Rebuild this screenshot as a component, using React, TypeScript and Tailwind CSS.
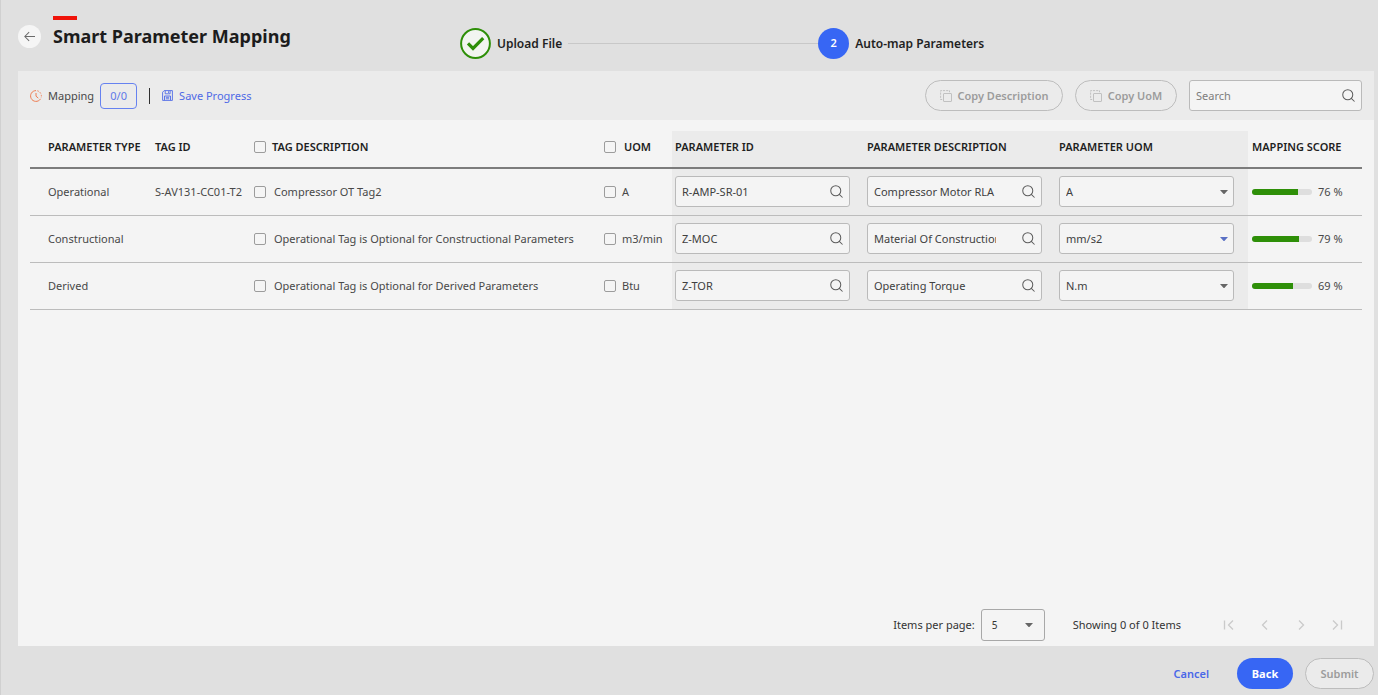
import React from "react";

type Row = {
  type: string;
  tagId: string;
  description: string;
  uom: string;
  paramId: string;
  paramDescription: string;
  paramUom: string;
  score: number;
  focused?: boolean;
};

const rows: Row[] = [
  {
    type: "Operational",
    tagId: "S-AV131-CC01-T2",
    description: "Compressor OT Tag2",
    uom: "A",
    paramId: "R-AMP-SR-01",
    paramDescription: "Compressor Motor RLA",
    paramUom: "A",
    score: 76,
  },
  {
    type: "Constructional",
    tagId: "",
    description: "Operational Tag is Optional for Constructional Parameters",
    uom: "m3/min",
    paramId: "Z-MOC",
    paramDescription: "Material Of Construction",
    paramUom: "mm/s2",
    score: 79,
    focused: true,
  },
  {
    type: "Derived",
    tagId: "",
    description: "Operational Tag is Optional for Derived Parameters",
    uom: "Btu",
    paramId: "Z-TOR",
    paramDescription: "Operating Torque",
    paramUom: "N.m",
    score: 69,
  },
];

function SearchIcon() {
  return (
    <svg className="size-[13px] shrink-0 text-[#5c5c5c]" viewBox="0 0 14 14" fill="none" stroke="currentColor" strokeWidth="1.1" strokeLinecap="round">
      <circle cx="6.2" cy="6.2" r="5.4" />
      <path d="M10 10.1 13.2 13.2" />
    </svg>
  );
}

function Caret({ className }: { className: string }) {
  return (
    <svg className={className} viewBox="0 0 8 4" fill="currentColor">
      <path d="M0 0h8L4.6 3.7a.8.8 0 0 1-1.2 0Z" />
    </svg>
  );
}

function CopyIcon() {
  return (
    <svg className="size-3 shrink-0 text-[#bcbcbc]" viewBox="0 0 12 12" fill="none" stroke="currentColor" strokeWidth="0.9">
      <rect x="3.5" y="3.5" width="8" height="8" rx="0.5" />
      <path d="M2.2 9.5H.6V.6h8.9v1.6" strokeDasharray="2.2 1" />
    </svg>
  );
}

function ClockIcon() {
  return (
    <svg className="size-3 shrink-0 text-[#ee7d52]" viewBox="0 0 12 12" fill="none" stroke="currentColor" strokeWidth="1">
      <path d="M6 .6a5.4 5.4 0 1 0 4.4 8.5" />
      <path d="M7.4.8a5.4 5.4 0 0 1 3.5 7.4" strokeDasharray="1.5 1.3" />
      <path d="M6 3v3.2l2.3 1.9" />
    </svg>
  );
}

function SaveIcon() {
  return (
    <svg className="size-[11px] shrink-0" viewBox="0 0 11 11" fill="none" stroke="currentColor" strokeWidth="0.9">
      <path d="M2.2.6h8.2v9.8H.6V2.2Z" />
      <path d="M3.2.8v3h4.9v-3M6.5 1.3v1.6M2.5 10.2V6h6v4.2M3.8 7.3h3.4M3.8 8.8h3.4" />
    </svg>
  );
}

function Checkbox({ label }: { label: string }) {
  return (
    <input
      type="checkbox"
      aria-label={label}
      className="size-3 shrink-0 appearance-none rounded-[2px] border border-[#9c9c9c] bg-[#f5f5f5] checked:bg-[#3366ff]"
    />
  );
}

function SearchField({ label, value }: { label: string; value: string }) {
  return (
    <label className="flex h-[31px] w-[175px] items-center gap-[26px] rounded-[3px] border border-[#bababa] bg-[#f4f4f4] px-1.5">
      <input aria-label={label} defaultValue={value} className="w-full min-w-0 bg-transparent text-[#404040] outline-none" />
      <SearchIcon />
    </label>
  );
}

function PagerButton({ label, path }: { label: string; path: string }) {
  return (
    <button type="button" aria-label={label} disabled className="flex size-6 items-center justify-center text-[#cacaca]">
      <svg className="size-3" viewBox="0 0 12 12" fill="none" stroke="currentColor" strokeWidth="1.3">
        <path d={path} />
      </svg>
    </button>
  );
}

const headCell = "h-[37px] pb-1 pl-1 text-left font-semibold whitespace-nowrap text-[#1f1f1f]";
const paramHeadCell = "h-[37px] bg-[#ebebeb] pb-1 pl-[3px] text-left font-semibold whitespace-nowrap text-[#1f1f1f]";
const bodyCell = "h-[47px] pl-1 whitespace-nowrap";
const paramCell = "h-[47px] bg-[#ebebeb] pl-[3px] whitespace-nowrap";

export default function App() {
  return (
    <div className="flex min-h-screen flex-col border-l border-[#d0d0d0] bg-[#e0e0e0] pr-1 pl-[17px] font-['Noto_Sans',sans-serif] text-[11px] leading-4 text-[#484848]">
      <header className="flex h-[71px] items-start">
        <div className="flex w-[442px] shrink-0 items-start">
          <button type="button" aria-label="Go back" className="mt-[25px] flex size-[23px] items-center justify-center rounded-full bg-[#f5f5f5] text-[#6a6a6a]">
            <svg className="size-[11px]" viewBox="0 0 12 12" fill="none" stroke="currentColor" strokeWidth="1.1">
              <path d="M12 6H1M5.6 1.2.9 6l4.7 4.8" />
            </svg>
          </button>
          <div className="mt-4 ml-3">
            <div className="h-1 w-6 bg-[#f0140a]" />
            <h1 className="mt-1 text-lg leading-6 font-bold whitespace-nowrap text-[#1c1c1c]">Smart Parameter Mapping</h1>
          </div>
        </div>
        <ol className="mt-7 flex items-center text-xs font-semibold whitespace-nowrap text-[#1f1f1f]">
          <li className="flex items-center gap-1.5">
            <svg className="size-[31px]" viewBox="0 0 31 31" fill="none">
              <circle cx="15.5" cy="15.5" r="14.4" fill="#f2f5f0" stroke="#2e8f08" strokeWidth="2" />
              <path d="m8 15.4 5 5L23.2 10.200" stroke="#2e8f08" strokeWidth="3.2" />
            </svg>
            Upload File
          </li>
          <li aria-hidden="true" className="ml-1.5 h-px w-[250px] bg-[#c8c8c8]" />
          <li className="flex items-center gap-1.5">
            <span className="flex size-[31px] items-center justify-center rounded-full bg-[#3766f4] text-[11px] text-white">2</span>
            Auto-map Parameters
          </li>
        </ol>
      </header>

      <main className="flex flex-1 flex-col bg-[#f4f4f4]">
        <div className="flex h-[49px] items-center justify-between bg-[#ebebeb] px-3">
          <div className="flex items-center">
            <ClockIcon />
            <span className="ml-1.5">Mapping</span>
            <span className="ml-1.5 flex h-[26px] w-[37px] items-center justify-center rounded border border-[#6682f0] text-[#5e78e8]">0/0</span>
            <span className="ml-3 h-4 w-px bg-[#303030]" />
            <button type="button" className="ml-3 flex items-center gap-1.5 text-[#4f6ae6]">
              <SaveIcon />
              Save Progress
            </button>
          </div>
          <div className="flex items-center gap-3">
            <button type="button" disabled className="flex h-[31px] w-[138px] items-center justify-center gap-1.5 rounded-full border border-[#bdbdbd] font-semibold whitespace-nowrap text-[#9c9c9c]">
              <CopyIcon />
              Copy Description
            </button>
            <button type="button" disabled className="flex h-[31px] w-[102px] items-center justify-center gap-1.5 rounded-full border border-[#bdbdbd] font-semibold whitespace-nowrap text-[#9c9c9c]">
              <CopyIcon />
              Copy UoM
            </button>
            <label className="flex h-[31px] w-[173px] items-center rounded-[3px] border border-[#bababa] bg-[#f4f4f4] px-1.5">
              <input type="search" aria-label="Search" placeholder="Search" className="w-full min-w-0 bg-transparent outline-none placeholder:text-[#7d7d7d]" />
              <SearchIcon />
            </label>
          </div>
        </div>

        <div className="px-3 pt-[11px]">
          <table className="w-full table-fixed border-collapse">
            <colgroup>
              <col className="w-[121px]" />
              <col className="w-[99px]" />
              <col />
              <col className="w-[72px]" />
              <col className="w-[192px]" />
              <col className="w-[192px]" />
              <col className="w-[192px]" />
              <col className="w-[114px]" />
            </colgroup>
            <thead>
              <tr className="border-b-2 border-[#7c7c7c]">
                <th className="h-[37px] pb-1 pl-[18px] text-left font-semibold whitespace-nowrap text-[#1f1f1f]">PARAMETER TYPE</th>
                <th className={headCell}>TAG ID</th>
                <th className={headCell}>
                  <div className="flex items-center gap-1.5">
                    <Checkbox label="Select all tag descriptions" />
                    TAG DESCRIPTION
                  </div>
                </th>
                <th className={headCell}>
                  <div className="flex items-center gap-2">
                    <Checkbox label="Select all units" />
                    UOM
                  </div>
                </th>
                <th className={paramHeadCell}>PARAMETER ID</th>
                <th className={paramHeadCell}>PARAMETER DESCRIPTION</th>
                <th className={paramHeadCell}>PARAMETER UOM</th>
                <th className={headCell}>MAPPING SCORE</th>
              </tr>
            </thead>
            <tbody>
              {rows.map((row) => (
                <tr key={row.type} className="border-b border-[#bcbcbc]">
                  <td className="h-[47px] pl-[18px] whitespace-nowrap">{row.type}</td>
                  <td className={bodyCell}>{row.tagId}</td>
                  <td className={bodyCell}>
                    <label className="flex items-center gap-2">
                      <Checkbox label={row.description} />
                      {row.description}
                    </label>
                  </td>
                  <td className={bodyCell}>
                    <label className="flex items-center gap-1.5">
                      <Checkbox label={`Unit ${row.uom}`} />
                      {row.uom}
                    </label>
                  </td>
                  <td className={paramCell}>
                    <SearchField label={`${row.type} parameter ID`} value={row.paramId} />
                  </td>
                  <td className={paramCell}>
                    <SearchField label={`${row.type} parameter description`} value={row.paramDescription} />
                  </td>
                  <td className={paramCell}>
                    <div className="relative w-[175px]">
                      <select
                        aria-label={`${row.type} parameter unit`}
                        defaultValue={row.paramUom}
                        className="block h-[31px] w-full appearance-none rounded-[3px] border border-[#bababa] bg-[#f4f4f4] pl-1.5 text-[#404040]"
                      >
                        <option>{row.paramUom}</option>
                      </select>
                      <Caret
                        className={
                          row.focused
                            ? "pointer-events-none absolute top-3.5 right-1.5 h-1 w-2 text-[#5a70c4]"
                            : "pointer-events-none absolute top-3.5 right-1.5 h-1 w-2 text-[#666666]"
                        }
                      />
                    </div>
                  </td>
                  <td className={bodyCell}>
                    <div className="flex items-center gap-1.5">
                      <div className="h-1.5 w-[60px] overflow-hidden rounded-full bg-[#dedede]">
                        <div className="h-full bg-[#2e8f08]" style={{ width: `${row.score}%` }} />
                      </div>
                      {row.score} %
                    </div>
                  </td>
                </tr>
              ))}
            </tbody>
          </table>
        </div>

        <div className="mt-auto flex items-center justify-end pr-[25px] pb-[5px] text-[#333333]">
          <label htmlFor="page-size">Items per page:</label>
          <div className="relative ml-1.5 w-16">
            <select id="page-size" defaultValue="5" className="block h-8 w-full appearance-none rounded-[3px] border border-[#a8a8a8] bg-[#f4f4f4] pl-2.5 text-[10px]">
              <option>5</option>
              <option>10</option>
            </select>
            <Caret className="pointer-events-none absolute top-3.5 right-3 h-1 w-2 text-[#666666]" />
          </div>
          <span className="mr-9 ml-7">Showing 0 of 0 Items</span>
          <div className="flex gap-3">
            <PagerButton label="First page" path="M1.500 1.500v9M10 1.500 5.500 6l4.500 4.500" />
            <PagerButton label="Previous page" path="M8 1.500 3.500 6 8 10.500" />
            <PagerButton label="Next page" path="M4 1.500 8.500 6 4 10.500" />
            <PagerButton label="Last page" path="M10.500 1.500v9M2 1.500 6.500 6 2 10.500" />
          </div>
        </div>
      </main>

      <footer className="flex h-[49px] items-center justify-end gap-3 pt-1.5 font-semibold">
        <button type="button" className="mr-4 text-[#4a68e8]">Cancel</button>
        <button type="button" className="h-[31px] w-14 rounded-full bg-[#3766f4] font-bold text-white">Back</button>
        <button type="button" disabled className="h-[31px] w-[69px] rounded-full border border-[#bdbdbd] bg-[#ebebeb] text-[#9c9c9c]">Submit</button>
      </footer>
    </div>
  );
}
